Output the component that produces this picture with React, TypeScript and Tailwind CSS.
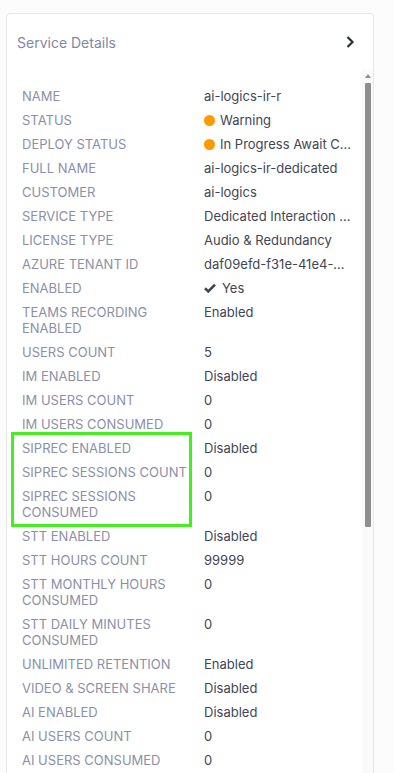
import { ReactNode } from "react";

interface Row {
  label: string;
  value: ReactNode;
  wide?: boolean;
}

function Dot({ text }: { text: string }) {
  return (
    <span className="flex items-center gap-[5px] min-w-0">
      <span className="w-[11px] h-[11px] rounded-full bg-[#ff9900] shrink-0" />
      <span className="truncate">{text}</span>
    </span>
  );
}

const rows: Row[] = [
  { label: "NAME", value: "ai-logics-ir-r" },
  { label: "STATUS", value: <Dot text="Warning" />, wide: true },
  { label: "DEPLOY STATUS", value: <Dot text="In Progress Await Customer Action" />, wide: true },
  { label: "FULL NAME", value: "ai-logics-ir-dedicated" },
  { label: "CUSTOMER", value: "ai-logics" },
  { label: "SERVICE TYPE", value: "Dedicated Interaction Recording" },
  { label: "LICENSE TYPE", value: "Audio & Redundancy" },
  { label: "AZURE TENANT ID", value: "daf09efd-f31e-41e4-b8c2-7d1a" },
  {
    label: "ENABLED",
    value: (
      <span className="flex items-center gap-[6px]">
        <svg width="12" height="10" viewBox="0 0 12 10" className="shrink-0">
          <path d="M1 5.2 L4.3 8.4 L11 1.6" fill="none" stroke="#3f4654" strokeWidth="2.6" />
        </svg>
        Yes
      </span>
    ),
  },
  { label: "TEAMS RECORDING ENABLED", value: "Enabled" },
  { label: "USERS COUNT", value: "5" },
  { label: "IM ENABLED", value: "Disabled" },
  { label: "IM USERS COUNT", value: "0" },
  { label: "IM USERS CONSUMED", value: "0" },
  { label: "SIPREC ENABLED", value: "Disabled" },
  { label: "SIPREC SESSIONS COUNT", value: "0" },
  { label: "SIPREC SESSIONS CONSUMED", value: "0" },
  { label: "STT ENABLED", value: "Disabled" },
  { label: "STT HOURS COUNT", value: "99999" },
  { label: "STT MONTHLY HOURS CONSUMED", value: "0" },
  { label: "STT DAILY MINUTES CONSUMED", value: "0" },
  { label: "UNLIMITED RETENTION", value: "Enabled" },
  { label: "VIDEO & SCREEN SHARE", value: "Disabled" },
  { label: "AI ENABLED", value: "Disabled" },
  { label: "AI USERS COUNT", value: "0" },
  { label: "AI USERS CONSUMED", value: "0" },
];

export default function App() {
  return (
    <div className="w-[394px] h-[773px] overflow-hidden bg-[#fcfcfc] pt-[13px] pl-[6px] font-['Inter','Noto_Sans',sans-serif]">
      <div className="relative w-[368px] h-[800px] bg-white border border-[#e6e6e6] rounded-[4px] flex flex-col">
        <div className="h-[56px] shrink-0 flex items-center justify-between pl-[10px] pr-[18px]">
          <span className="text-[14px] text-[#8188a6]">Service Details</span>
          <svg width="10" height="14" viewBox="0 0 10 14">
            <path d="M2.5 2 L7.5 7 L2.5 12" fill="none" stroke="#2b2f36" strokeWidth="2.2" />
          </svg>
        </div>
        <div className="relative flex-1 overflow-hidden pt-[14px] pl-[15px]">
          {rows.map((r) => (
            <div key={r.label} className="flex py-[4px] text-[13px] leading-[16px]">
              <div className="w-[182px] shrink-0 pr-[8px] text-[#8b90a8]">{r.label}</div>
              <div className={r.wide ? "w-[150px] min-w-0 text-[#3f4654] truncate" : "w-[147px] min-w-0 text-[#3f4654] truncate"}>
                {r.value}
              </div>
            </div>
          ))}
          {/* scrollbar */}
          <div className="absolute right-0 top-0 bottom-0 w-[11px] bg-[#fafafa] flex flex-col items-center pt-[4px]">
            <div className="w-0 h-0 border-l-[3px] border-r-[3px] border-b-[4px] border-l-transparent border-r-transparent border-b-[#8f8f8f]" />
            <div className="mt-[5px] w-[6px] h-[444px] bg-[#8f8f8f] rounded-[1px]" />
          </div>
        </div>
        <div className="absolute left-[4px] top-[418px] w-[181px] h-[95px] border-[3px] border-[#44ee1f] pointer-events-none" />
      </div>
    </div>
  );
}
